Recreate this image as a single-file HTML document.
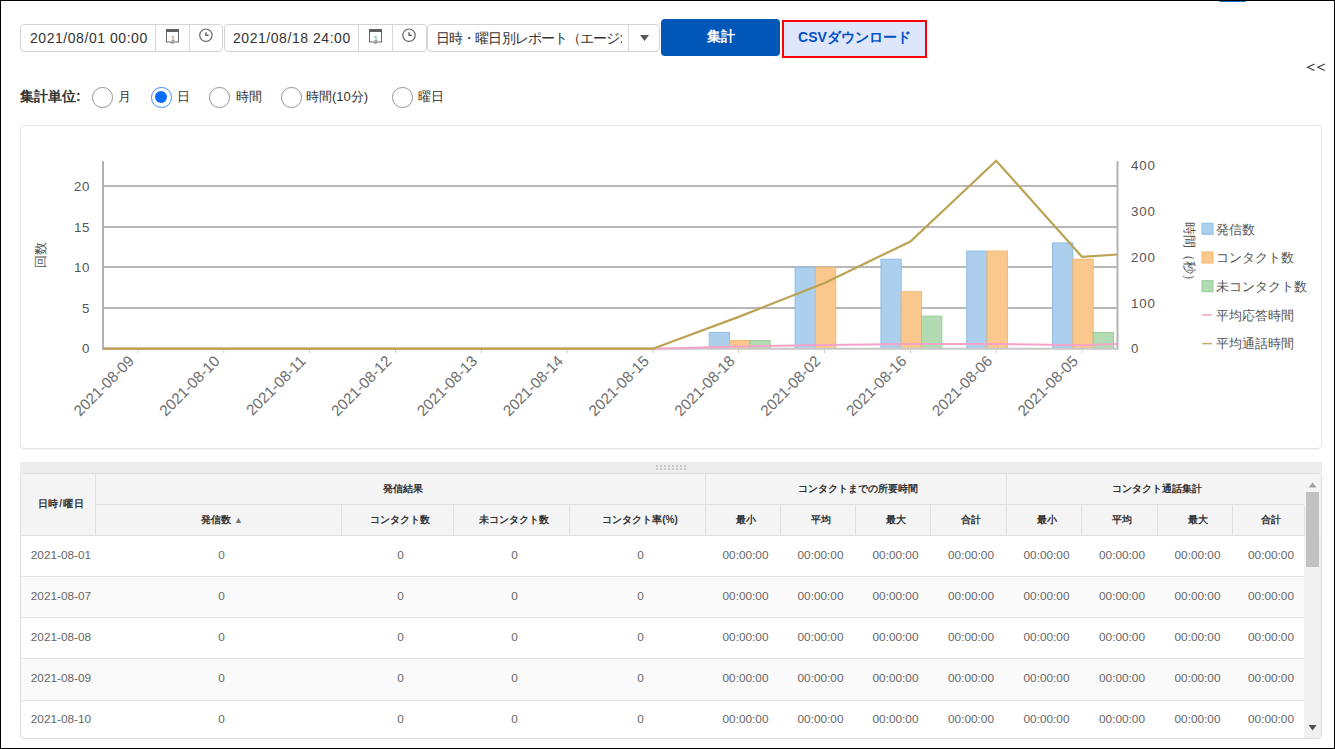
<!DOCTYPE html>
<html><head><meta charset="utf-8">
<style>
*{box-sizing:border-box;margin:0;padding:0}
html,body{width:1335px;height:749px;overflow:hidden;background:#fff}
body{position:relative;font-family:"Liberation Sans",sans-serif;color:#333}
.a{position:absolute}
.frame{left:0;top:0;width:1335px;height:749px;border:1px solid #000;z-index:50;pointer-events:none}
.inp{border:1px solid #d4d4d4;border-radius:4px;background:#fff}
.dtxt{font-size:14px;color:#333;white-space:nowrap;letter-spacing:0.55px}
.vdiv{width:1px;background:#d9d9d9}
.radio{width:20.5px;height:20.5px;border-radius:50%;border:1.7px solid #949494;background:#fff;margin-top:0.3px}
.radio.on{border:1.8px solid #3d8cff}
.radio.on::after{content:"";position:absolute;left:2.65px;top:2.65px;width:12px;height:12px;border-radius:50%;background:#0a6cff}
.rl{font-size:13px;color:#333;white-space:nowrap;margin-top:-0.7px}
.th{font-size:10px;font-weight:bold;color:#333;white-space:nowrap;text-align:center}
.td{font-size:11.8px;color:#666;white-space:nowrap;text-align:center}
</style></head><body>
<div class="a frame"></div>

<!-- date input 1 -->
<div class="a inp" style="left:20px;top:24px;width:203px;height:28px"></div>
<div class="a dtxt" style="left:30px;top:30px">2021/08/01 00:00</div>
<div class="a vdiv" style="left:155px;top:25px;height:26px"></div>
<div class="a vdiv" style="left:189px;top:25px;height:26px"></div>
<!-- date input 2 -->
<div class="a inp" style="left:224px;top:24px;width:203px;height:28px"></div>
<div class="a dtxt" style="left:233px;top:30px">2021/08/18 24:00</div>
<div class="a vdiv" style="left:358px;top:25px;height:26px"></div>
<div class="a vdiv" style="left:392px;top:25px;height:26px"></div>
<!-- select -->
<div class="a inp" style="left:427px;top:24px;width:233px;height:28px"></div>
<div class="a dtxt" style="left:436px;top:30px;letter-spacing:-0.9px;width:186px;overflow:hidden">日時・曜日別レポート（エージ:</div>
<div class="a vdiv" style="left:628px;top:25px;height:26px"></div>

<svg class="a" style="left:0;top:0" width="1335" height="120">
  <!-- calendar icons -->
  <g fill="none" stroke="#666">
    <rect x="166.5" y="29.5" width="12" height="12.5" stroke-width="1"/>
    <rect x="166" y="29" width="13" height="3" fill="#606060" stroke="none"/>
    <rect x="369.5" y="29.5" width="12" height="12.5" stroke-width="1"/>
    <rect x="369" y="29" width="13" height="3" fill="#606060" stroke="none"/>
    <path d="M171 42.5 Q172.5 44 174 42.5" stroke-width="1"/>
    <path d="M374 42.5 Q375.5 44 377 42.5" stroke-width="1"/>
    <circle cx="205.9" cy="35.2" r="6.2" stroke-width="1.2"/>
    <path d="M205.9 32.2 V35.2 H208.6" stroke-width="1.4"/>
    <circle cx="409" cy="35.2" r="6.2" stroke-width="1.2"/>
    <path d="M409 32.2 V35.2 H411.7" stroke-width="1.4"/>
  </g>
  <text x="172.8" y="40.8" font-size="7.5" fill="#777" text-anchor="middle" font-family="Liberation Sans">1</text>
  <text x="375.8" y="40.8" font-size="7.5" fill="#777" text-anchor="middle" font-family="Liberation Sans">1</text>
  <path d="M640 35 L649 35 L644.5 41 Z" fill="#555"/>
  <!-- << -->
  <path d="M1314.5 64 L1307.5 67.3 L1314.5 70.6 M1324.8 64 L1317.8 67.3 L1324.8 70.6" stroke="#3a3a3a" stroke-width="1.15" fill="none"/>
  <!-- blue bar top -->
  <rect x="1219" y="0" width="27" height="2" rx="1" fill="#1a6fd6"/>
</svg>

<!-- buttons -->
<div class="a" style="left:661px;top:19px;width:119px;height:37px;background:#0057b8;border-radius:4px;color:#fff;font-size:14px;font-weight:bold;text-align:center;line-height:35px">集計</div>
<div class="a" style="left:782px;top:20px;width:145px;height:38px;background:#dee6fb;border:2px solid #f00;color:#0050c4;font-size:14px;font-weight:bold;text-align:center;line-height:30px">CSVダウンロード</div>

<!-- radio row -->
<div class="a" style="left:20px;top:88px;font-size:14px;font-weight:bold;color:#333">集計単位:</div>
<div class="a radio" style="left:92px;top:87px"></div><div class="a rl" style="left:118px;top:89px">月</div>
<div class="a radio on" style="left:151px;top:87px"></div><div class="a rl" style="left:177px;top:89px">日</div>
<div class="a radio" style="left:209px;top:87px"></div><div class="a rl" style="left:236px;top:89px">時間</div>
<div class="a radio" style="left:281px;top:87px"></div><div class="a rl" style="left:306px;top:89px">時間(10分)</div>
<div class="a radio" style="left:392px;top:87px"></div><div class="a rl" style="left:418px;top:89px">曜日</div>

<!-- chart container -->
<div class="a" style="left:20px;top:125px;width:1302px;height:324px;border:1px solid #e6e6e6;border-radius:4px;box-shadow:0 1px 1px rgba(0,0,0,0.04)"></div>
<svg class="a" style="left:0;top:0" width="1335" height="460" font-family="Liberation Sans">
<line x1="103" x2="1118" y1="186" y2="186" stroke="#b8b8b8" stroke-width="2"/>
<line x1="103" x2="1118" y1="227" y2="227" stroke="#b8b8b8" stroke-width="2"/>
<line x1="103" x2="1118" y1="267" y2="267" stroke="#b8b8b8" stroke-width="2"/>
<line x1="103" x2="1118" y1="308" y2="308" stroke="#b8b8b8" stroke-width="2"/>
<rect x="709.29" y="332.43" width="20.30" height="16.27" fill="#abcfec" stroke="#8fbde6" stroke-width="1"/>
<rect x="729.59" y="340.56" width="20.30" height="8.13" fill="#fac88d" stroke="#f4b56e" stroke-width="1"/>
<rect x="749.89" y="340.56" width="20.30" height="8.13" fill="#b3dbb3" stroke="#98cc98" stroke-width="1"/>
<rect x="795.11" y="267.35" width="20.30" height="81.35" fill="#abcfec" stroke="#8fbde6" stroke-width="1"/>
<rect x="815.41" y="267.35" width="20.30" height="81.35" fill="#fac88d" stroke="#f4b56e" stroke-width="1"/>
<rect x="880.93" y="259.22" width="20.30" height="89.48" fill="#abcfec" stroke="#8fbde6" stroke-width="1"/>
<rect x="901.23" y="291.75" width="20.30" height="56.94" fill="#fac88d" stroke="#f4b56e" stroke-width="1"/>
<rect x="921.53" y="316.16" width="20.30" height="32.54" fill="#b3dbb3" stroke="#98cc98" stroke-width="1"/>
<rect x="966.75" y="251.08" width="20.30" height="97.62" fill="#abcfec" stroke="#8fbde6" stroke-width="1"/>
<rect x="987.05" y="251.08" width="20.30" height="97.62" fill="#fac88d" stroke="#f4b56e" stroke-width="1"/>
<rect x="1052.57" y="242.94" width="20.30" height="105.75" fill="#abcfec" stroke="#8fbde6" stroke-width="1"/>
<rect x="1072.87" y="259.22" width="20.30" height="89.48" fill="#fac88d" stroke="#f4b56e" stroke-width="1"/>
<rect x="1093.17" y="332.43" width="20.30" height="16.27" fill="#b3dbb3" stroke="#98cc98" stroke-width="1"/>
<line x1="103" x2="103" y1="161" y2="349.7" stroke="#b2b2b2" stroke-width="2"/>
<line x1="1117.5" x2="1117.5" y1="161" y2="349.7" stroke="#b2b2b2" stroke-width="2"/>
<line x1="103" x2="1118" y1="348.7" y2="348.7" stroke="#c8c8c8" stroke-width="2"/>
<line x1="138.0" x2="138.0" y1="350" y2="353" stroke="#c8c8c8" stroke-width="1"/>
<line x1="223.8" x2="223.8" y1="350" y2="353" stroke="#c8c8c8" stroke-width="1"/>
<line x1="309.6" x2="309.6" y1="350" y2="353" stroke="#c8c8c8" stroke-width="1"/>
<line x1="395.5" x2="395.5" y1="350" y2="353" stroke="#c8c8c8" stroke-width="1"/>
<line x1="481.3" x2="481.3" y1="350" y2="353" stroke="#c8c8c8" stroke-width="1"/>
<line x1="567.1" x2="567.1" y1="350" y2="353" stroke="#c8c8c8" stroke-width="1"/>
<line x1="652.9" x2="652.9" y1="350" y2="353" stroke="#c8c8c8" stroke-width="1"/>
<line x1="738.7" x2="738.7" y1="350" y2="353" stroke="#c8c8c8" stroke-width="1"/>
<line x1="824.6" x2="824.6" y1="350" y2="353" stroke="#c8c8c8" stroke-width="1"/>
<line x1="910.4" x2="910.4" y1="350" y2="353" stroke="#c8c8c8" stroke-width="1"/>
<line x1="996.2" x2="996.2" y1="350" y2="353" stroke="#c8c8c8" stroke-width="1"/>
<line x1="1082.0" x2="1082.0" y1="350" y2="353" stroke="#c8c8c8" stroke-width="1"/>
<polyline fill="none" stroke="#f5a3c7" stroke-width="2" points="103.0,348.7 652.9,348.7 738.7,346.5 824.6,345.0 910.4,344.0 996.2,344.0 1082.0,345.3 1117.5,344.0"/>
<polyline fill="none" stroke="#bba253" stroke-width="2.2" stroke-linejoin="miter" points="103.0,348.7 652.9,348.7 738.7,316.9 824.6,282.9 910.4,241.5 996.2,160.8 1082.0,256.8 1117.5,254.5"/>
<text x="90.3" y="190.7" font-size="13.3" letter-spacing="0.8" fill="#555" text-anchor="end">20</text>
<text x="90.3" y="231.7" font-size="13.3" letter-spacing="0.8" fill="#555" text-anchor="end">15</text>
<text x="90.3" y="271.7" font-size="13.3" letter-spacing="0.8" fill="#555" text-anchor="end">10</text>
<text x="90.3" y="312.7" font-size="13.3" letter-spacing="0.8" fill="#555" text-anchor="end">5</text>
<text x="90.3" y="353.4" font-size="13.3" letter-spacing="0.8" fill="#555" text-anchor="end">0</text>
<text x="1131" y="170.2" font-size="13.3" letter-spacing="0.8" fill="#555">400</text>
<text x="1131" y="216.0" font-size="13.3" letter-spacing="0.8" fill="#555">300</text>
<text x="1131" y="261.8" font-size="13.3" letter-spacing="0.8" fill="#555">200</text>
<text x="1131" y="307.6" font-size="13.3" letter-spacing="0.8" fill="#555">100</text>
<text x="1131" y="353.4" font-size="13.3" letter-spacing="0.8" fill="#555">0</text>
<text x="0" y="0" font-size="15.2" fill="#6e6e6e" text-anchor="end" transform="translate(135.0,362) rotate(-45)">2021-08-09</text>
<text x="0" y="0" font-size="15.2" fill="#6e6e6e" text-anchor="end" transform="translate(220.8,362) rotate(-45)">2021-08-10</text>
<text x="0" y="0" font-size="15.2" fill="#6e6e6e" text-anchor="end" transform="translate(306.6,362) rotate(-45)">2021-08-11</text>
<text x="0" y="0" font-size="15.2" fill="#6e6e6e" text-anchor="end" transform="translate(392.5,362) rotate(-45)">2021-08-12</text>
<text x="0" y="0" font-size="15.2" fill="#6e6e6e" text-anchor="end" transform="translate(478.3,362) rotate(-45)">2021-08-13</text>
<text x="0" y="0" font-size="15.2" fill="#6e6e6e" text-anchor="end" transform="translate(564.1,362) rotate(-45)">2021-08-14</text>
<text x="0" y="0" font-size="15.2" fill="#6e6e6e" text-anchor="end" transform="translate(649.9,362) rotate(-45)">2021-08-15</text>
<text x="0" y="0" font-size="15.2" fill="#6e6e6e" text-anchor="end" transform="translate(735.7,362) rotate(-45)">2021-08-18</text>
<text x="0" y="0" font-size="15.2" fill="#6e6e6e" text-anchor="end" transform="translate(821.6,362) rotate(-45)">2021-08-02</text>
<text x="0" y="0" font-size="15.2" fill="#6e6e6e" text-anchor="end" transform="translate(907.4,362) rotate(-45)">2021-08-16</text>
<text x="0" y="0" font-size="15.2" fill="#6e6e6e" text-anchor="end" transform="translate(993.2,362) rotate(-45)">2021-08-06</text>
<text x="0" y="0" font-size="15.2" fill="#6e6e6e" text-anchor="end" transform="translate(1079.0,362) rotate(-45)">2021-08-05</text>
<text x="0" y="0" font-size="13" fill="#555" text-anchor="middle" transform="translate(45,255) rotate(-90)">回数</text>
<text x="0" y="0" font-size="13.2" fill="#555" text-anchor="middle" transform="translate(1184.5,254) rotate(90)">時間（秒）</text>
<rect x="1202" y="223.3" width="11" height="11" fill="#abcfec" stroke="#8fbde6" stroke-width="1"/>
<text x="1216" y="233.6" font-size="13" fill="#555">発信数</text>
<rect x="1202" y="252.0" width="11" height="11" fill="#fac88d" stroke="#f4b56e" stroke-width="1"/>
<text x="1216" y="262.3" font-size="13" fill="#555">コンタクト数</text>
<rect x="1202" y="280.7" width="11" height="11" fill="#b3dbb3" stroke="#98cc98" stroke-width="1"/>
<text x="1216" y="291.0" font-size="13" fill="#555">未コンタクト数</text>
<line x1="1202" x2="1212" y1="314.9" y2="314.9" stroke="#f5a3c7" stroke-width="1.5"/>
<text x="1216" y="319.7" font-size="13" fill="#555">平均応答時間</text>
<line x1="1202" x2="1212" y1="343.6" y2="343.6" stroke="#c2ad6e" stroke-width="1.5"/>
<text x="1216" y="348.4" font-size="13" fill="#555">平均通話時間</text>
</svg>

<!-- table -->
<div class="a" style="left:20px;top:462px;width:1302px;height:12px;background:#ececec"></div>
<div class="a" style="left:20px;top:473px;width:1302px;height:266px;border:1px solid #dcdcdc;border-radius:4px;overflow:hidden;background:#fff">
<div class="a" style="left:0;top:0;width:1300px;height:62px;background:#f4f4f4"></div>
<div class="a" style="left:-1px;top:102px;width:1284px;height:1px;background:#e3e3e3"></div>
<div class="a td" style="left:-60px;width:200px;top:73px;line-height:16px"><span style="font-size:11.8px">2021-08-01</span></div>
<div class="a td" style="left:100.5px;width:200px;top:73px;line-height:16px">0</div>
<div class="a td" style="left:279.5px;width:200px;top:73px;line-height:16px">0</div>
<div class="a td" style="left:393.5px;width:200px;top:73px;line-height:16px">0</div>
<div class="a td" style="left:519.5px;width:200px;top:73px;line-height:16px">0</div>
<div class="a td" style="left:624.5px;width:200px;top:73px;line-height:16px">00:00:00</div>
<div class="a td" style="left:699.5px;width:200px;top:73px;line-height:16px">00:00:00</div>
<div class="a td" style="left:774.5px;width:200px;top:73px;line-height:16px">00:00:00</div>
<div class="a td" style="left:850.0px;width:200px;top:73px;line-height:16px">00:00:00</div>
<div class="a td" style="left:925.5px;width:200px;top:73px;line-height:16px">00:00:00</div>
<div class="a td" style="left:1001.0px;width:200px;top:73px;line-height:16px">00:00:00</div>
<div class="a td" style="left:1076.5px;width:200px;top:73px;line-height:16px">00:00:00</div>
<div class="a td" style="left:1150.0px;width:200px;top:73px;line-height:16px">00:00:00</div>
<div class="a" style="left:0;top:103px;width:1283px;height:40px;background:#fafafa"></div>
<div class="a" style="left:-1px;top:143px;width:1284px;height:1px;background:#e3e3e3"></div>
<div class="a td" style="left:-60px;width:200px;top:114px;line-height:16px"><span style="font-size:11.8px">2021-08-07</span></div>
<div class="a td" style="left:100.5px;width:200px;top:114px;line-height:16px">0</div>
<div class="a td" style="left:279.5px;width:200px;top:114px;line-height:16px">0</div>
<div class="a td" style="left:393.5px;width:200px;top:114px;line-height:16px">0</div>
<div class="a td" style="left:519.5px;width:200px;top:114px;line-height:16px">0</div>
<div class="a td" style="left:624.5px;width:200px;top:114px;line-height:16px">00:00:00</div>
<div class="a td" style="left:699.5px;width:200px;top:114px;line-height:16px">00:00:00</div>
<div class="a td" style="left:774.5px;width:200px;top:114px;line-height:16px">00:00:00</div>
<div class="a td" style="left:850.0px;width:200px;top:114px;line-height:16px">00:00:00</div>
<div class="a td" style="left:925.5px;width:200px;top:114px;line-height:16px">00:00:00</div>
<div class="a td" style="left:1001.0px;width:200px;top:114px;line-height:16px">00:00:00</div>
<div class="a td" style="left:1076.5px;width:200px;top:114px;line-height:16px">00:00:00</div>
<div class="a td" style="left:1150.0px;width:200px;top:114px;line-height:16px">00:00:00</div>
<div class="a" style="left:-1px;top:184px;width:1284px;height:1px;background:#e3e3e3"></div>
<div class="a td" style="left:-60px;width:200px;top:155px;line-height:16px"><span style="font-size:11.8px">2021-08-08</span></div>
<div class="a td" style="left:100.5px;width:200px;top:155px;line-height:16px">0</div>
<div class="a td" style="left:279.5px;width:200px;top:155px;line-height:16px">0</div>
<div class="a td" style="left:393.5px;width:200px;top:155px;line-height:16px">0</div>
<div class="a td" style="left:519.5px;width:200px;top:155px;line-height:16px">0</div>
<div class="a td" style="left:624.5px;width:200px;top:155px;line-height:16px">00:00:00</div>
<div class="a td" style="left:699.5px;width:200px;top:155px;line-height:16px">00:00:00</div>
<div class="a td" style="left:774.5px;width:200px;top:155px;line-height:16px">00:00:00</div>
<div class="a td" style="left:850.0px;width:200px;top:155px;line-height:16px">00:00:00</div>
<div class="a td" style="left:925.5px;width:200px;top:155px;line-height:16px">00:00:00</div>
<div class="a td" style="left:1001.0px;width:200px;top:155px;line-height:16px">00:00:00</div>
<div class="a td" style="left:1076.5px;width:200px;top:155px;line-height:16px">00:00:00</div>
<div class="a td" style="left:1150.0px;width:200px;top:155px;line-height:16px">00:00:00</div>
<div class="a" style="left:0;top:185px;width:1283px;height:41px;background:#fafafa"></div>
<div class="a" style="left:-1px;top:226px;width:1284px;height:1px;background:#e3e3e3"></div>
<div class="a td" style="left:-60px;width:200px;top:196px;line-height:16px"><span style="font-size:11.8px">2021-08-09</span></div>
<div class="a td" style="left:100.5px;width:200px;top:196px;line-height:16px">0</div>
<div class="a td" style="left:279.5px;width:200px;top:196px;line-height:16px">0</div>
<div class="a td" style="left:393.5px;width:200px;top:196px;line-height:16px">0</div>
<div class="a td" style="left:519.5px;width:200px;top:196px;line-height:16px">0</div>
<div class="a td" style="left:624.5px;width:200px;top:196px;line-height:16px">00:00:00</div>
<div class="a td" style="left:699.5px;width:200px;top:196px;line-height:16px">00:00:00</div>
<div class="a td" style="left:774.5px;width:200px;top:196px;line-height:16px">00:00:00</div>
<div class="a td" style="left:850.0px;width:200px;top:196px;line-height:16px">00:00:00</div>
<div class="a td" style="left:925.5px;width:200px;top:196px;line-height:16px">00:00:00</div>
<div class="a td" style="left:1001.0px;width:200px;top:196px;line-height:16px">00:00:00</div>
<div class="a td" style="left:1076.5px;width:200px;top:196px;line-height:16px">00:00:00</div>
<div class="a td" style="left:1150.0px;width:200px;top:196px;line-height:16px">00:00:00</div>
<div class="a td" style="left:-60px;width:200px;top:237px;line-height:16px"><span style="font-size:11.8px">2021-08-10</span></div>
<div class="a td" style="left:100.5px;width:200px;top:237px;line-height:16px">0</div>
<div class="a td" style="left:279.5px;width:200px;top:237px;line-height:16px">0</div>
<div class="a td" style="left:393.5px;width:200px;top:237px;line-height:16px">0</div>
<div class="a td" style="left:519.5px;width:200px;top:237px;line-height:16px">0</div>
<div class="a td" style="left:624.5px;width:200px;top:237px;line-height:16px">00:00:00</div>
<div class="a td" style="left:699.5px;width:200px;top:237px;line-height:16px">00:00:00</div>
<div class="a td" style="left:774.5px;width:200px;top:237px;line-height:16px">00:00:00</div>
<div class="a td" style="left:850.0px;width:200px;top:237px;line-height:16px">00:00:00</div>
<div class="a td" style="left:925.5px;width:200px;top:237px;line-height:16px">00:00:00</div>
<div class="a td" style="left:1001.0px;width:200px;top:237px;line-height:16px">00:00:00</div>
<div class="a td" style="left:1076.5px;width:200px;top:237px;line-height:16px">00:00:00</div>
<div class="a td" style="left:1150.0px;width:200px;top:237px;line-height:16px">00:00:00</div>
<div class="a" style="left:74px;top:30px;width:1209px;height:1px;background:#e0e0e0"></div>
<div class="a" style="left:-1px;top:61px;width:1284px;height:1px;background:#e0e0e0"></div>
<div class="a" style="left:74px;top:0px;width:1px;height:61px;background:#e0e0e0"></div>
<div class="a" style="left:684px;top:0px;width:1px;height:61px;background:#e0e0e0"></div>
<div class="a" style="left:985px;top:0px;width:1px;height:61px;background:#e0e0e0"></div>
<div class="a" style="left:320px;top:31px;width:1px;height:30px;background:#e0e0e0"></div>
<div class="a" style="left:432px;top:31px;width:1px;height:30px;background:#e0e0e0"></div>
<div class="a" style="left:548px;top:31px;width:1px;height:30px;background:#e0e0e0"></div>
<div class="a" style="left:759px;top:31px;width:1px;height:30px;background:#e0e0e0"></div>
<div class="a" style="left:834px;top:31px;width:1px;height:30px;background:#e0e0e0"></div>
<div class="a" style="left:909px;top:31px;width:1px;height:30px;background:#e0e0e0"></div>
<div class="a" style="left:1060px;top:31px;width:1px;height:30px;background:#e0e0e0"></div>
<div class="a" style="left:1136px;top:31px;width:1px;height:30px;background:#e0e0e0"></div>
<div class="a" style="left:1211px;top:31px;width:1px;height:30px;background:#e0e0e0"></div>
<div class="a" style="left:1283px;top:31px;width:1px;height:31px;background:#e0e0e0"></div>
<div class="a th" style="left:-60px;width:200px;top:22px;line-height:16px"><span style="letter-spacing:0.8px">日時/曜日</span></div>
<div class="a th" style="left:282px;width:200px;top:7px;line-height:16px">発信結果</div>
<div class="a th" style="left:737px;width:200px;top:7px;line-height:16px">コンタクトまでの所要時間</div>
<div class="a th" style="left:1036px;width:200px;top:7px;line-height:16px">コンタクト通話集計</div>
<div class="a th" style="left:101px;width:200px;top:38px;line-height:16px">発信数 <span style="font-size:9px;color:#777">▲</span></div>
<div class="a th" style="left:279px;width:200px;top:38px;line-height:16px">コンタクト数</div>
<div class="a th" style="left:393px;width:200px;top:38px;line-height:16px">未コンタクト数</div>
<div class="a th" style="left:519px;width:200px;top:38px;line-height:16px">コンタクト率(%)</div>
<div class="a th" style="left:624.5px;width:200px;top:38px;line-height:16px">最小</div>
<div class="a th" style="left:699.5px;width:200px;top:38px;line-height:16px">平均</div>
<div class="a th" style="left:774.5px;width:200px;top:38px;line-height:16px">最大</div>
<div class="a th" style="left:850.0px;width:200px;top:38px;line-height:16px">合計</div>
<div class="a th" style="left:925.5px;width:200px;top:38px;line-height:16px">最小</div>
<div class="a th" style="left:1001.0px;width:200px;top:38px;line-height:16px">平均</div>
<div class="a th" style="left:1076.5px;width:200px;top:38px;line-height:16px">最大</div>
<div class="a th" style="left:1150.0px;width:200px;top:38px;line-height:16px">合計</div>
<div class="a" style="left:1283px;top:62px;width:17px;height:202px;background:#f1f1f1"></div>
<div class="a" style="left:1285px;top:18px;width:13px;height:75px;background:#c1c1c1"></div>
<svg class="a" style="left:1283px;top:0" width="17" height="264"><path d="M4.6 13.5 L12.6 13.5 L8.6 8.5 Z" fill="#a3a3a3"/><path d="M4.6 251 L12.6 251 L8.6 256.5 Z" fill="#505050"/></svg>
</div>
<svg class="a" style="left:0;top:0" width="1335" height="480"><rect x="656" y="465" width="2" height="2" fill="#c9c9c9"/><rect x="660" y="465" width="2" height="2" fill="#c9c9c9"/><rect x="664" y="465" width="2" height="2" fill="#c9c9c9"/><rect x="668" y="465" width="2" height="2" fill="#c9c9c9"/><rect x="672" y="465" width="2" height="2" fill="#c9c9c9"/><rect x="676" y="465" width="2" height="2" fill="#c9c9c9"/><rect x="680" y="465" width="2" height="2" fill="#c9c9c9"/><rect x="684" y="465" width="2" height="2" fill="#c9c9c9"/><rect x="656" y="468" width="2" height="2" fill="#c9c9c9"/><rect x="660" y="468" width="2" height="2" fill="#c9c9c9"/><rect x="664" y="468" width="2" height="2" fill="#c9c9c9"/><rect x="668" y="468" width="2" height="2" fill="#c9c9c9"/><rect x="672" y="468" width="2" height="2" fill="#c9c9c9"/><rect x="676" y="468" width="2" height="2" fill="#c9c9c9"/><rect x="680" y="468" width="2" height="2" fill="#c9c9c9"/><rect x="684" y="468" width="2" height="2" fill="#c9c9c9"/></svg>
</body></html>
